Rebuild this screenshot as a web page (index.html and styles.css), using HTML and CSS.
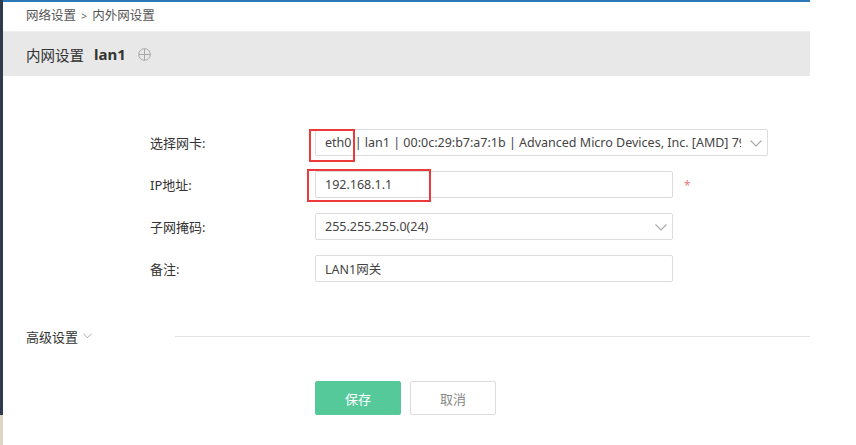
FILE: index.html
```html
<!DOCTYPE html>
<html lang="zh-CN">
<head>
<meta charset="utf-8">
<title>内外网设置</title>
<link rel="stylesheet" href="styles.css">
</head>
<body>
<div class="screen">
  <div class="sidebar"><div class="sidebar-dark"></div><div class="sidebar-light"></div></div>
  <div class="panel">
    <div class="breadcrumb">网络设置 <span class="sep">&gt;</span> 内外网设置</div>
    <div class="title-bar">
      <span class="title">内网设置</span>
      <span class="title-name">lan1</span>
      <svg class="plus" width="13" height="13" viewBox="0 0 13 13"><circle cx="6.5" cy="6.5" r="5.8" fill="none" stroke="#a8a8a8" stroke-width="1"/><path d="M6.5 0.7V12.3M0.7 6.5H12.3" stroke="#a8a8a8" stroke-width="1"/></svg>
    </div>
    <div class="form">
      <div class="row">
        <div class="label">选择网卡:</div>
        <div class="field select wide">
          <span class="val">eth0 | lan1 | 00:0c:29:b7:a7:1b | Advanced Micro Devices, Inc. [AMD] 79c970 [PCnet32 LANCE]</span>
          <svg class="chev" width="12" height="7" viewBox="0 0 12 7"><path d="M0.5 0.5L6 6L11.5 0.5" fill="none" stroke="#aaa" stroke-width="1.2"/></svg>
          <div class="mark mark-eth"></div>
        </div>
      </div>
      <div class="row">
        <div class="label">IP地址:</div>
        <div class="field">
          <span class="val">192.168.1.1</span>
          <div class="mark mark-ip"></div>
        </div>
        <span class="req">*</span>
      </div>
      <div class="row">
        <div class="label">子网掩码:</div>
        <div class="field select">
          <span class="val">255.255.255.0(24)</span>
          <svg class="chev" width="12" height="7" viewBox="0 0 12 7"><path d="M0.5 0.5L6 6L11.5 0.5" fill="none" stroke="#aaa" stroke-width="1.2"/></svg>
        </div>
      </div>
      <div class="row">
        <div class="label">备注:</div>
        <div class="field"><span class="val">LAN1网关</span></div>
      </div>
    </div>
    <div class="advanced">
      <span class="adv-text">高级设置</span>
      <svg class="adv-chev" width="9" height="6" viewBox="0 0 9 6"><path d="M0.5 0.8L4.5 4.8L8.5 0.8" fill="none" stroke="#aaa" stroke-width="1"/></svg>
      <div class="adv-line"></div>
    </div>
    <div class="actions">
      <button class="btn btn-save">保存</button>
      <button class="btn btn-cancel">取消</button>
    </div>
  </div>
</div>
</body>
</html>
```
FILE: styles.css
```css
html, body {
  margin: 0;
  padding: 0;
  background: #ffffff;
}
body {
  font-family: "Noto Sans", "Noto Sans CJK SC", sans-serif;
  color: #333;
  width: 856px;
  height: 445px;
  overflow: hidden;
}
.screen {
  display: flex;
  height: 445px;
}
.sidebar {
  width: 3px;
  display: flex;
  flex-direction: column;
}
.sidebar-dark {
  height: 415px;
  background: #2f3b4d;
}
.sidebar-light {
  flex: 1;
  background: #ddd6c2;
}
.panel {
  width: 807px;
  border-top: 2px solid #2b78b8;
  display: flex;
  flex-direction: column;
}
.breadcrumb {
  height: 29px;
  line-height: 28px;
  padding-left: 23px;
  font-size: 12.5px;
  color: #555;
}
.breadcrumb .sep {
  font-size: 10px;
  color: #666;
  padding: 0 2px;
}
.title-bar {
  height: 45px;
  background: #e8e8e8;
  border-top: 1px solid #eeeeee;
  box-sizing: border-box;
  display: flex;
  align-items: center;
  padding-left: 23px;
}
.title {
  font-size: 14.5px;
  color: #333;
}
.title-name {
  font-size: 15px;
  font-weight: bold;
  color: #333;
  margin-left: 10px;
}
.plus {
  margin-left: 12px;
  margin-top: 1px;
}
.form {
  padding-top: 53px;
  padding-left: 147px;
  display: flex;
  flex-direction: column;
  gap: 15px;
}
.row {
  display: flex;
  align-items: center;
  height: 27px;
}
.label {
  width: 165px;
  font-size: 13px;
  color: #333;
}
.field {
  position: relative;
  width: 358px;
  height: 27px;
  box-sizing: border-box;
  border: 1px solid #dcdcdc;
  border-radius: 2px;
  background: #fff;
  display: flex;
  align-items: center;
  padding-left: 9px;
  padding-right: 26px;
}
.field.wide {
  width: 453px;
}
.val {
  font-size: 12.5px;
  color: #444;
  white-space: nowrap;
  overflow: hidden;
  flex: 1;
}
.chev {
  position: absolute;
  right: 5px;
  top: 10px;
}
.req {
  color: #f07a7a;
  font-size: 12px;
  margin-left: 11px;
  margin-top: 2px;
}
.mark {
  position: absolute;
  border: 2px solid #ea3a3a;
  box-sizing: border-box;
}
.mark-eth {
  left: -7px;
  top: -1px;
  width: 46px;
  height: 33px;
}
.mark-ip {
  left: -9px;
  top: -3px;
  width: 124px;
  height: 33px;
}
.advanced {
  margin-top: 44px;
  display: flex;
  align-items: center;
  padding-left: 23px;
  height: 20px;
}
.adv-text {
  font-size: 13px;
  color: #333;
}
.adv-chev {
  margin-left: 5px;
}
.adv-line {
  margin-left: 83px;
  flex: 1;
  height: 1px;
  background: #e3e3e3;
}
.actions {
  margin-top: 35px;
  padding-left: 312px;
  display: flex;
  gap: 9px;
}
.btn {
  width: 86px;
  height: 34px;
  border-radius: 2px;
  font-family: "Noto Sans CJK SC", sans-serif;
  font-size: 13px;
  cursor: pointer;
}
.btn-save {
  background: #56c99b;
  border: 1px solid #56c99b;
  color: #fff;
}
.btn-cancel {
  background: #fff;
  border: 1px solid #dcdcdc;
  color: #888;
}
```
